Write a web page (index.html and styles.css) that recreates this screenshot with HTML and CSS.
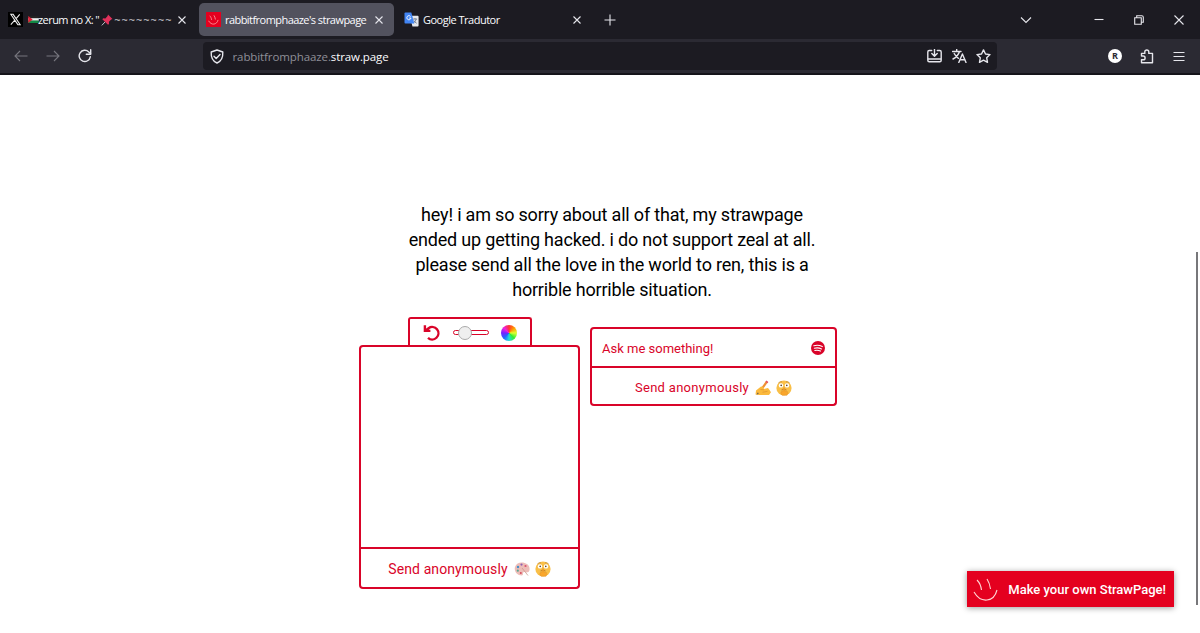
FILE: index.html
```html
<!DOCTYPE html>
<html lang="en">
<head>
    <meta charset="UTF-8">
    <meta name="viewport" content="width=device-width, initial-scale=1.0">
    <title>rabbitfromphaaze's strawpage</title>
    <link rel="stylesheet" href="styles.css">
</head>
<body>
<svg class="sprite" width="0" height="0">
    <symbol id="close" viewBox="0 0 10 10"><path d="M1.500 1.500l7 7M8.500 1.500l-7 7"/></symbol>
    <symbol id="smile" viewBox="0 0 26 26"><path d="M4 4c2 2 4 6 4.500 10M14 3c2 3 3 6 3.500 10M1 16c7 12 20 10 23-2"/></symbol>
    <symbol id="shush" viewBox="0 0 16 16">
        <circle cx="8" cy="8" r="7.600" fill="#f9bf48"/>
        <path d="M2.500 2.800q1.500-1.500 3.500-.9M10 1.900q2-.6 3.500.9" fill="none" stroke="#b98232" stroke-width=".7"/>
        <circle cx="5" cy="5.400" r="2.200" fill="#fff"/>
        <circle cx="11" cy="5.400" r="2.200" fill="#fff"/>
        <circle cx="5.200" cy="5.400" r=".8" fill="#59401f"/>
        <circle cx="10.800" cy="5.400" r=".8" fill="#59401f"/>
        <path d="M5.500 10q2.500-1.500 5 0" fill="none" stroke="#a86a20" stroke-width=".8"/>
        <path d="M7.200 8q.9-.8 1.600 0v3.200l2.600.3q1.200 1.500-.4 3.800H6.200q-2-1.500-1.200-3.500l2.200-.6z" fill="#f9a62c" stroke="#dc8c26" stroke-width=".4"/>
    </symbol>
</svg>

<header class="browser">
    <div class="tabs">
        <div class="tab tab-first">
            <svg class="favicon" viewBox="0 0 16 16"><path fill="#000" d="M0 0h16v16H0z"/><path d="M3 2.500h2.500l7.500 11h-2.500zM12.500 2.500L8.700 7M7 9l-4 4.500" fill="none" stroke="#eee" stroke-width="1.100"/></svg>
            <svg class="flag" viewBox="0 0 12 8"><path fill="#222" d="M0 0h12v3H0z"/><path fill="#eee" d="M0 2.500h12v3H0z"/><path fill="#128a45" d="M0 5.200h12V8H0z"/><path fill="#e02239" d="M0 0l5 4-5 4z"/></svg>
            <span class="tab-title">zerum no X: "</span>
            <svg class="pin" viewBox="0 0 12 12"><path class="needle" d="M4.500 7.500L.8 11.400"/><path fill="#e0315b" d="M7 .5l4.500 4.500-1.300.5-2.300 2.300.1 2.200-1 .8L1.300 5.300l.9-1 2.200.1 2.200-2.400z"/></svg>
            <span class="tab-title waves">~~~~~~~~</span>
            <svg class="close"><use href="#close"/></svg>
        </div>
        <div class="tab tab-active">
            <svg class="favicon" viewBox="-5 -5 36 36"><path fill="#e4001f" d="M-5-5h36v36H-5z"/><use href="#smile" class="smile-small" width="26" height="26"/></svg>
            <span class="tab-title">rabbitfromphaaze's strawpage</span>
            <svg class="close"><use href="#close"/></svg>
        </div>
        <div class="tab tab-last">
            <svg class="favicon" viewBox="0 0 16 16"><path fill="#e6e8ec" d="M6 4h8.500q1 0 1 1v9.500q0 1-1 1H9z"/><path d="M9.500 7.500H14M11.700 6.500v1M13 7.500q-.5 3-3 4M10.500 9q1 2 3 3" fill="none" stroke="#68768a" stroke-width=".9"/><path fill="#4285f4" d="M1.500.5h6.300l3.200 11.700H1.500q-1 0-1-1V1.500q0-1 1-1z"/><path d="M7 4.800a2.200 2.200 0 1 0 .4 1.700H5.500" fill="none" stroke="#fff"/></svg>
            <span class="tab-title">Google Tradutor</span>
            <svg class="close"><use href="#close"/></svg>
        </div>
        <button class="new-tab"><svg width="12" height="12" viewBox="0 0 12 12"><path d="M6 .5v11M.5 6h11"/></svg></button>
        <div class="window-buttons">
            <button class="tab-list"><svg width="12" height="8" viewBox="0 0 12 8"><path d="M1 1.500l5 5 5-5"/></svg></button>
            <button><svg width="10" height="10" viewBox="0 0 10 10"><path d="M.5 4.500h9"/></svg></button>
            <button><svg width="10" height="10" viewBox="0 0 10 10"><path d="M.7 2.700h6.600v6.600H.7zM2.700 2.500V.7h5.100q1.500 0 1.500 1.500v5.100H7.500"/></svg></button>
            <button><svg width="10" height="10" viewBox="0 0 10 10"><path d="M.5.5l9 9M9.500.5l-9 9"/></svg></button>
        </div>
    </div>

    <div class="toolbar">
        <button class="off"><svg width="14" height="12" viewBox="0 0 14 12"><path d="M13.500 6H1.200M6 1L1 6l5 5"/></svg></button>
        <button class="off"><svg width="14" height="12" viewBox="0 0 14 12"><path d="M.5 6h12.300M8 1l5 5-5 5"/></svg></button>
        <button><svg class="thick" width="14" height="14" viewBox="0 0 14 14"><path d="M12.300 7.800A5.600 5.600 0 1 1 10.800 3l1.700 1.700"/><path d="M12.700.8v4.400H8.300"/></svg></button>
        <div class="urlbar">
            <svg class="thick" width="14" height="15" viewBox="0 0 14 15"><path d="M7 1l5.800 2c.3 5.500-1.600 9.300-5.800 11C2.800 12.300.9 8.500 1.200 3zM4 7.200l2.200 2.200L10 5.500"/></svg>
            <p class="url">rabbitfromphaaze.<b>straw.page</b></p>
            <svg class="thick" width="15" height="14" viewBox="0 0 15 14"><path d="M4.700 1.500H2.200q-1.400 0-1.400 1.400v8.300q0 1.500 1.400 1.500h10.600q1.400 0 1.400-1.500V2.900q0-1.400-1.400-1.400h-2.500M1 10h13M7.500 0v7M4.800 4.500l2.700 2.700 2.700-2.700"/></svg>
            <svg class="thick" width="15" height="14" viewBox="0 0 15 14"><path d="M.5 2.500h8.500M4.700.5v2M7.500 2.500Q6 7.500 1 10M2.200 4.500Q4 8 6.500 9.300M6.800 13.500l3.600-8.500 3.600 8.500M8 10.800h5"/></svg>
            <svg class="thick" width="15" height="14" viewBox="0 0 15 14"><path d="M7.500.9l2 4.100 4.500.6-3.300 3.200.8 4.500-4-2.100-4 2.100.8-4.500L1 5.600 5.500 5z"/></svg>
        </div>
        <div class="tools">
            <button><span class="account">R</span></button>
            <button><svg class="thick" width="14" height="15" viewBox="0 0 14 15"><path d="M1.500 7V4.400h3.300V3a2 2 0 0 1 4 0v1.400h3.700v9.400h-11v-3h1.700a1.900 1.900 0 0 0 0-3.800z"/></svg></button>
            <button><svg width="12" height="11" viewBox="0 0 12 11"><path d="M.5 1.500h11M.5 5.500h11M.5 9.500h11"/></svg></button>
        </div>
    </div>
</header>

<main class="page">
    <p class="message">hey! i am so sorry about all of that, my strawpage<br>ended up getting hacked. i do not support zeal at all.<br>please send all the love in the world to ren, this is a<br>horrible horrible situation.</p>

    <div class="widgets">
        <section class="drawing">
            <div class="draw-tools">
                <svg width="18" height="18" viewBox="0 0 18 18" class="undo"><path d="M2.500 6.700L5.600 4.200A6.200 6.200 0 1 1 5 13.800M1.900 1.200v5.700h5.500"/></svg>
                <div class="slider"><span class="knob"></span></div>
                <span class="wheel"></span>
            </div>
            <div class="canvas"></div>
            <button class="send">
                <span>Send anonymously</span>
                <svg class="emoji" viewBox="0 0 16 16"><path fill="#edbdb8" d="M1 6C2.500 1 9 .3 13 3c3.500 2.500 3.200 7.500.6 8.300-1.800.5-3.200-1-4.300.2-1 1.200.5 2.500-1.600 3C3 14.500-.2 10 1 6z"/><circle cx="4" cy="6" r="1.200" fill="#448fc9"/><circle cx="7.500" cy="3.600" r="1.100" fill="#8d62b4"/><circle cx="11.500" cy="5" r="1.100" fill="#db5270"/><circle cx="3.800" cy="9.700" r="1.100" fill="#5aa690"/><circle cx="6.800" cy="12" r="1" fill="#d74c5d"/><path d="M8 7l6 7.500" stroke="#c99a8c" stroke-width=".8"/></svg>
                <svg class="emoji"><use href="#shush"/></svg>
            </button>
        </section>

        <section class="ask">
            <div class="question">
                <span>Ask me something!</span>
                <svg width="14" height="14" viewBox="0 0 14 14"><circle cx="7" cy="7" r="7" fill="#d90429"/><path d="M2.800 4.800q4.500-1.300 8.500.8M3.300 7.200q4-1 7.200.7M3.800 9.500q3-.7 5.700.6" fill="none" stroke="#fff" stroke-width="1.100" stroke-linecap="round"/></svg>
            </div>
            <button class="send">
                <span>Send anonymously</span>
                <svg class="emoji" viewBox="0 0 16 16"><path d="M5 11.500L12 1.500" stroke="#ef8f35" stroke-width="2.200"/><path d="M11 1.200l1.900 1.400" stroke="#e64d65" stroke-width="1.500"/><path fill="#fbb93c" d="M1 10.500l5-4 2.500.2.200 2.300 4.300-1 1.200 1.500L16 12.300 14 15H3.500L.5 14.500z"/><path d="M5.500 9.500l3.500.3M7.500 12.300l5-1" stroke="#dd9130" stroke-width=".7"/><path d="M1.500 15l1.200-2.500 1.200.8z" fill="#555"/></svg>
                <svg class="emoji"><use href="#shush"/></svg>
            </button>
        </section>
    </div>

    <a class="promo" href="#">
        <svg width="26" height="26"><use href="#smile"/></svg>
        <span>Make your own StrawPage!</span>
    </a>
    <div class="scrollbar"></div>
</main>
</body>
</html>
```
FILE: styles.css
```css
* {
    box-sizing: border-box;
}
body {
    margin: 0;
    height: 633px;
    overflow: hidden;
    background-color: #fff;
    font-family: Roboto, sans-serif;
}
p {
    margin: 0;
}
svg {
    display: block;
    flex: none;
}
.sprite {
    position: absolute;
}
button {
    display: flex;
    align-items: center;
    justify-content: center;
    padding: 0;
    border: none;
    background: none;
    font-family: inherit;
}

/* browser window */
.browser {
    height: 75px;
    background-color: #2b2a33;
    border-bottom: 2px solid #15141a;
    color: #fbfbfe;
    font-family: "Open Sans", sans-serif;
}
.browser button svg,
.browser .close,
.urlbar svg {
    fill: none;
    stroke: #e6e6ec;
    stroke-width: 1.1;
}
.browser svg.thick {
    stroke-width: 1.4;
    stroke-linejoin: round;
    stroke-linecap: round;
}
.tabs {
    display: flex;
    align-items: center;
    height: 39px;
    background-color: #1c1b22;
}
.tab {
    display: flex;
    align-items: center;
    height: 33px;
    border-radius: 5px;
}
.tab-first {
    width: 199px;
    padding: 0 12px 0 8px;
}
.tab-active {
    width: 195px;
    padding: 0 10px 0 7px;
    background-color: #52525e;
}
.tab-last {
    width: 196px;
    padding: 0 8px 0 10px;
}
.favicon {
    width: 15px;
    height: 15px;
    margin-right: 4px;
}
.flag {
    width: 11px;
    height: 7px;
    margin-left: 1px;
    margin-right: -1px;
}
.pin {
    width: 12px;
    height: 12px;
    margin: 0 1px 0 2px;
}
.needle {
    stroke: #b9c0c8;
}
.tab-title {
    font-size: 11px;
    white-space: nowrap;
    letter-spacing: -0.55px;
}
.tab-last .tab-title {
    letter-spacing: -0.5px;
}
.tab-title.waves {
    color: #d0d0d6;
    letter-spacing: 1px;
}
.close {
    width: 10px;
    height: 10px;
    margin-left: auto;
}
.smile-small {
    fill: none;
    stroke: #ffb0b0;
    stroke-width: 1.8;
}
.new-tab {
    width: 40px;
}
.window-buttons {
    display: flex;
    margin-left: auto;
    padding-right: 1px;
}
.window-buttons button {
    width: 40px;
    height: 39px;
}
.window-buttons .tab-list {
    margin-right: 33px;
}
.toolbar {
    display: flex;
    align-items: center;
    height: 34px;
    padding-left: 5px;
}
.toolbar button {
    width: 32px;
    height: 30px;
}
.toolbar .off {
    opacity: 0.4;
}
.urlbar {
    display: flex;
    align-items: center;
    gap: 9.5px;
    width: 794px;
    height: 28px;
    margin-left: 102px;
    padding: 0 6px 0 7px;
    border-radius: 4px;
    background-color: #1c1b22;
}
.url {
    flex: 1;
    margin-left: -1px;
    color: #8f8f98;
    font-size: 11.5px;
    letter-spacing: -0.1px;
}
.url b {
    color: #fbfbfe;
    font-weight: normal;
}
.tools {
    display: flex;
    margin-left: auto;
    padding-right: 5px;
}
.account {
    width: 14px;
    height: 14px;
    border-radius: 50%;
    background-color: #fff;
    color: #2b2a33;
    font-size: 9px;
    font-weight: bold;
    line-height: 14px;
}

/* straw page */
.page {
    position: relative;
    height: 558px;
    padding: 127px 0 0 359px;
}
.message {
    width: 506px;
    color: #000;
    font-size: 18px;
    line-height: 25px;
    letter-spacing: -0.19px;
    text-align: center;
}
.widgets {
    display: flex;
    align-items: flex-start;
    gap: 10px;
    margin-top: 15px;
    color: #d90429;
}
.drawing {
    width: 221px;
}
.draw-tools {
    display: flex;
    align-items: center;
    justify-content: space-between;
    width: 124px;
    height: 29px;
    margin: 0 auto -1px 49px;
    padding: 0 13px;
    border: 2px solid #d90429;
    border-bottom: none;
    border-radius: 3px 3px 0 0;
}
.undo {
    fill: none;
    stroke: #d90429;
    stroke-width: 2.4;
}
.slider {
    display: flex;
    align-items: center;
    width: 36px;
    height: 5px;
    padding-left: 4px;
    border: 1px solid #d90429;
    border-radius: 3px;
}
.knob {
    width: 14px;
    height: 14px;
    border: 1px solid #aaa;
    border-radius: 50%;
    background-color: #efefef;
}
.wheel {
    width: 16px;
    height: 16px;
    border-radius: 50%;
    background: conic-gradient(#f33, #f90, #df3, #3e3, #2dd, #26f, #72f, #e2d, #f33);
}
.canvas {
    height: 204px;
    border: 2px solid #d90429;
    border-radius: 4px 4px 0 0;
}
.send {
    gap: 6px;
    width: 100%;
    height: 40px;
    padding-top: 2px;
    border: 2px solid #d90429;
    border-top: none;
    border-radius: 0 0 4px 4px;
    color: #d90429;
    font-size: 14px;
    letter-spacing: 0.1px;
}
.emoji {
    width: 16px;
    height: 16px;
}
.emoji + .emoji {
    margin-left: -1px;
}
.ask {
    width: 247px;
    margin-top: 10px;
}
.question {
    display: flex;
    align-items: center;
    justify-content: space-between;
    height: 41px;
    padding: 1px 10px 0;
    border: 2px solid #d90429;
    border-radius: 4px 4px 0 0;
    font-size: 13px;
}
.ask .send {
    height: 38px;
    padding-top: 3px;
    font-size: 13px;
    letter-spacing: 0.3px;
}
.promo {
    display: flex;
    align-items: center;
    justify-content: space-between;
    position: absolute;
    right: 26px;
    bottom: 26px;
    width: 207px;
    height: 36px;
    padding: 0 8px 0 6px;
    background-color: #e4001f;
    box-shadow: 0 1px 6px rgba(0,0,0,0.4);
    color: #fff;
    font-size: 13px;
    font-weight: 500;
    text-decoration: none;
}
.promo svg {
    fill: none;
    stroke: #ffd5d5;
    stroke-width: 1.1;
}
.scrollbar {
    position: absolute;
    top: 177px;
    right: 2px;
    width: 2px;
    height: 353px;
    background-color: #77777a;
}
```
